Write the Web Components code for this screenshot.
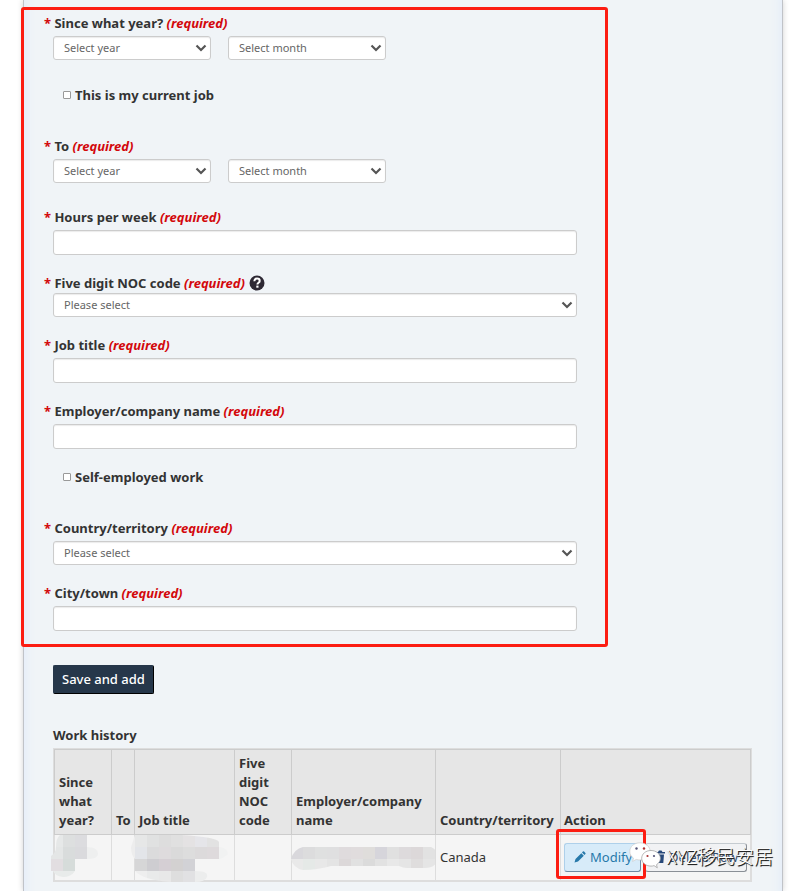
<!DOCTYPE html>
<html lang="en">
<head>
<meta charset="utf-8">
<meta name="viewport" content="width=device-width, initial-scale=1">
<title>Work history</title>
<style>
  body {
    margin: 0;
    background: #fff;
    color: #333;
    font: 13px/20px "Noto Sans", "Noto Sans CJK SC", sans-serif;
  }
</style>
</head>
<body>
<page-panel>
  <marked-area>
    <date-field label="Since what year?"></date-field>
    <check-field class="mid">This is my current job</check-field>
    <date-field class="far" label="To"></date-field>
    <text-field class="near" label="Hours per week"></text-field>
    <select-field label="Five digit NOC code" help></select-field>
    <text-field label="Job title"></text-field>
    <text-field label="Employer/company name"></text-field>
    <check-field>Self-employed work</check-field>
    <select-field class="far" label="Country/territory"></select-field>
    <text-field label="City/town"></text-field>
  </marked-area>
  <save-button>Save and add</save-button>
  <work-history></work-history>
</page-panel>

<script>
  // Styles shared by all the labelled fields
  const fieldStyle = `
    :host {
      display: block;
    }
    .row {
      display: flex;
      align-items: center;
      gap: 4px;
      height: 20px;
      margin-bottom: 3px;
    }
    .row.help {
      margin-bottom: 0;
    }
    label {
      font-weight: 700;
    }
    .star, em {
      color: #d3080c;
    }
    .controls {
      display: flex;
      gap: 17px;
      margin: 0 28px 0 9px;
    }
    input, select {
      box-sizing: border-box;
      width: 100%;
      height: 25px;
      margin: 0;
      padding: 0 10px;
      border: 1px solid #ccc;
      border-radius: 3px;
      background: #fff;
      box-shadow: inset 0 1px 1px rgba(0, 0, 0, 0.08);
      color: #666;
      font: 11px/16px "Noto Sans", sans-serif;
    }
    .select {
      display: grid;
      flex: 1;
      align-items: center;
    }
    .select > * {
      grid-area: 1 / 1;
    }
    .select svg {
      justify-self: end;
      margin-right: 4px;
      pointer-events: none;
    }
    select {
      height: 24px;
      appearance: none;
    }
  `;

  const helpIcon = `
    <svg width="16" height="16" viewBox="0 0 16 16" role="img" aria-label="Help">
      <circle cx="8" cy="8" r="7.5" fill="#2d2833"/>
      <path d="M5.3 6.2C5.4 4.4 6.5 3.6 8 3.6c1.600 0 2.700.9 2.700 2.300 0 1.900-2.300 1.900-2.300 3.500" fill="none" stroke="#fff" stroke-width="2"/>
      <path d="M7.300 10.600h2.200v2.100H7.300z" fill="#fff"/>
    </svg>
  `;

  function labelRow(text, id, help) {
    return `
      <div class="row ${help ? 'help' : ''}">
        <label for="${id}"><span class="star">*</span> ${text} <em>(required)</em></label>
        ${help ? helpIcon : ''}
      </div>
    `;
  }

  function selectBox(id, placeholder) {
    return `
      <div class="select">
        <select id="${id}" aria-label="${placeholder}"><option>${placeholder}</option></select>
        <svg width="12" height="8" viewBox="0 0 12 8">
          <path d="M1.500 1.500 6 6l4.500-4.500" fill="none" stroke="#555" stroke-width="2.200"/>
        </svg>
      </div>
    `;
  }

  class PagePanel extends HTMLElement {
    constructor() {
      super();
      this.attachShadow({ mode: 'open' }).innerHTML = `
        <style>
          :host {
            display: block;
            box-sizing: border-box;
            min-height: 100vh;
            margin: 0 16px 0 23px;
            padding: 7px 30px 9px 29px;
            border: solid #c0c3c8;
            border-width: 0 1px;
            background: #f0f4f7;
            box-shadow: 0 0 6px rgba(0, 0, 0, 0.18), inset 12px 0 12px -12px #dfeafa, inset -12px 0 12px -12px #dfeafa;
            clip-path: inset(0 -12px);
          }
        </style>
        <slot></slot>
      `;
    }
  }

  class MarkedArea extends HTMLElement {
    constructor() {
      super();
      this.attachShadow({ mode: 'open' }).innerHTML = `
        <style>
          :host {
            display: block;
            box-sizing: border-box;
            max-width: 587px;
            margin-left: -32px;
            padding: 3px 0 13px 20px;
            border: 3px solid #fc1d12;
            border-radius: 3px;
          }
          ::slotted(*) {
            margin-top: 18px;
          }
          ::slotted(:first-child) {
            margin-top: 0;
          }
          ::slotted(.near) {
            margin-top: 24px;
          }
          ::slotted(.mid) {
            margin-top: 25px;
          }
          ::slotted(.far) {
            margin-top: 31px;
          }
        </style>
        <slot></slot>
      `;
    }
  }

  class DateField extends HTMLElement {
    constructor() {
      super();
      this.attachShadow({ mode: 'open' }).innerHTML = `
        <style>
          ${fieldStyle}
          .controls {
            max-width: 333px;
          }
        </style>
        ${labelRow(this.getAttribute('label'), 'year')}
        <div class="controls">
          ${selectBox('year', 'Select year')}
          ${selectBox('month', 'Select month')}
        </div>
      `;
    }
  }

  class SelectField extends HTMLElement {
    constructor() {
      super();
      this.attachShadow({ mode: 'open' }).innerHTML = `
        <style>${fieldStyle}</style>
        ${labelRow(this.getAttribute('label'), 'choice', this.hasAttribute('help'))}
        <div class="controls">${selectBox('choice', 'Please select')}</div>
      `;
    }
  }

  class TextField extends HTMLElement {
    constructor() {
      super();
      this.attachShadow({ mode: 'open' }).innerHTML = `
        <style>${fieldStyle}</style>
        ${labelRow(this.getAttribute('label'), 'text')}
        <div class="controls"><input id="text" type="text"></div>
      `;
    }
  }

  class CheckField extends HTMLElement {
    constructor() {
      super();
      this.attachShadow({ mode: 'open' }).innerHTML = `
        <style>
          :host {
            display: block;
            padding-left: 19px;
          }
          label {
            display: flex;
            align-items: center;
            gap: 4px;
            font-weight: 700;
          }
          input {
            box-sizing: border-box;
            width: 8px;
            height: 8px;
            margin: 0;
            border: 1px solid #999;
            border-radius: 1px;
            background: #fff;
            appearance: none;
          }
          input:checked {
            background: #26374a;
          }
        </style>
        <label><input type="checkbox"><slot></slot></label>
      `;
    }
  }

  class SaveButton extends HTMLElement {
    constructor() {
      super();
      this.attachShadow({ mode: 'open' }).innerHTML = `
        <style>
          :host {
            display: flex;
            margin-top: 18px;
          }
          button {
            height: 29px;
            padding: 0 8px 2px;
            border: 1px solid #26374a;
            border-color: #26374a #000 #000 #26374a;
            border-radius: 2px;
            background: #26374a;
            color: #fff;
            font: 500 13px/20px "Noto Sans", sans-serif;
          }
        </style>
        <button type="button"><slot></slot></button>
      `;
    }
  }

  // Blocked-out cell values: rows of 12px tiles cut to an outline
  const patches = {
    since: {
      width: 48,
      height: 43,
      outline: 'M9 0H36V12Q47 12 47 19 47 24 36 24H24V36Q20 42 12 42 4 41 2 36H0V21Q5 18 5 12 5 3 9 0Z',
      rows: [
        ['e6e8e8', 'dddfdf', 'dcdcdf', 'eeeeee'],
        ['e4e6e6', 'd9dcdc', 'dadadd', 'eeefef'],
        ['e2dee1', 'd6dcda', 'efefef', 'efefef'],
        ['e8ebea', 'e8ebea', 'efefef', 'efefef'],
      ],
    },
    title: {
      width: 97,
      height: 48,
      outline: 'M4 0H50Q86 2 88 7V12Q97 13 97 19 92 24 88 24H64V36Q78 36 76 42 74 47 64 47H40Q12 45 4 36V24Q0 20 0 12Z',
      offset: 4,
      rows: [
        ['e6e7e7', 'e0e1e1', 'dddddd', 'e0e0e0', 'e4e2e3', 'e5e5e9', 'e2e2e2', 'f0f0f0'],
        ['e3e5e9', 'dbdbdc', 'dedbdd', 'dadada', 'dddddd', 'dcdadb', 'dedadc', 'f1f2f2'],
        ['d6d6d7', 'cecdd1', 'd5cfd4', 'd3d1d1', 'd2d2d6', 'eeeeee', 'efefef', 'efefef'],
        ['eeeeee', 'e9eaea', 'e8e8e8', 'dedede', 'e1e1e3', 'eceded', 'efefef', 'efefef'],
      ],
    },
    employer: {
      width: 147,
      height: 24,
      outline: 'M12 0H140Q147 3 147 10 146 21 134 21H116Q112 21 108 19H40Q26 23 12 23 2 21 0 12 3 2 12 0Z',
      rows: [
        ['d9d8dc', 'dcdcdd', 'dfe0e0', 'dfdfe0', 'dfdbdd', 'e0dcdd', 'dfdddb', 'd6d5db', 'e0e0e0', 'dddadc', 'dcd8d9', 'e2e2e2', 'e6e6e6'],
        ['e9e9e9', 'e5e9e7', 'e8e8e8', 'e4e4e4', 'dcd8d9', 'e1e1e1', 'dbdbdb', 'e2e2e2', 'e8e8e8', 'e5e5e5', 'dfdddd', 'e5e5e5', 'e6e6e6'],
      ],
    },
  };

  class TilePatch extends HTMLElement {
    constructor() {
      super();
      const patch = patches[this.getAttribute('name')];
      const offset = patch.offset || 0;
      const tiles = patch.rows.map((row, y) => row.map((color, x) => `
        <rect x="${x * 12 + offset}" y="${y * 12}" width="12" height="12" fill="#${color}"/>
      `).join('')).join('');
      this.attachShadow({ mode: 'open' }).innerHTML = `
        <style>
          :host {
            display: block;
            position: absolute;
          }
          svg {
            display: block;
          }
        </style>
        <svg width="${patch.width}" height="${patch.height}" shape-rendering="crispEdges" aria-hidden="true">
          <clipPath id="outline"><path d="${patch.outline}"/></clipPath>
          <g clip-path="url(#outline)">
            <rect width="${offset}" height="48" fill="#ededed"/>
            ${tiles}
          </g>
        </svg>
      `;
    }
  }

  class RowActions extends HTMLElement {
    constructor() {
      super();
      this.attachShadow({ mode: 'open' }).innerHTML = `
        <style>
          :host {
            display: flex;
            position: relative;
            gap: 4px;
          }
          button {
            display: flex;
            align-items: center;
            gap: 4px;
            height: 29px;
            padding: 0 8px 2px 9px;
            border: 1px solid #aed0ea;
            border-right-color: #6f8ba3;
            border-bottom-color: #6f8ba3;
            border-radius: 3px;
            background: #d7ebf9;
            color: #2779aa;
            font: 13px/20px "Noto Sans", sans-serif;
            white-space: nowrap;
          }
          .delete {
            flex: 1;
            border-color: #c5cbd0 #8a8f96 #8a8f96 #c5cbd0;
            background: #f1f2f4;
            color: #335075;
          }
          .mark {
            position: absolute;
            inset: -14px auto -7px -8px;
            width: 84px;
            border: 3px solid #fc1d12;
            border-radius: 3px;
          }
          .stamp {
            display: flex;
            position: absolute;
            top: -2px;
            right: -26px;
            align-items: center;
            gap: 5px;
            color: #fff;
            font: 300 19px/30px "Noto Sans CJK SC", sans-serif;
            text-shadow: 1px 1px 1px #222, 1px 1px 0 #333;
            white-space: nowrap;
          }
        </style>
        <button type="button">
          <svg width="12" height="12" viewBox="0 0 12 12">
            <path d="M.5 11.500l1-3.500L7.300 2.200l2.500 2.500-5.800 5.800zM8 1.500l.9-.9q.6-.5 1.200 0l1.300 1.300q.5.600 0 1.200l-.9.900z" fill="#2779aa"/>
          </svg>
          Modify
        </button>
        <button type="button" class="delete">
          <svg width="10" height="13" viewBox="0 0 10 13">
            <path d="M0 2h3l1-1.500h2.500l1 1.500H10v1.500H0zM1 4.500h8L8.300 13H1.700z" fill="#26487a"/>
          </svg>
          Delete Row
        </button>
        <span class="mark"></span>
        <span class="stamp">
          <svg width="32" height="28" viewBox="0 0 32 28">
            <path d="M11 .8C5 .8.800 4.600.800 9.500c0 2.800 1.400 5.100 3.700 6.600l-.9 3.300 3.700-2c1.200.4 2.400.6 3.700.6 5.800 0 10.200-3.800 10.200-8.500S16.800.8 11 .8z" fill="#fff" stroke="#ccc" stroke-width=".7"/>
            <circle cx="7.500" cy="6.500" r="1.200" fill="#557"/>
            <circle cx="15" cy="6.500" r="1.200" fill="#a33"/>
            <path d="M22 8.500c-5.300 0-9.300 3.400-9.300 7.800s4 7.800 9.300 7.800c1.100 0 2.100-.1 3-.5l3.300 2.200-.8-3.100c2.300-1.400 3.900-3.600 3.900-6.400 0-4.400-4.200-7.800-9.400-7.800z" fill="#fff" stroke="#999" stroke-width=".7"/>
            <circle cx="18.500" cy="14" r="1.100" fill="#a33"/>
            <circle cx="25" cy="14" r="1.100" fill="#557"/>
          </svg>
          <span>XYZ移民安居</span>
        </span>
      `;
    }
  }

  class WorkHistory extends HTMLElement {
    constructor() {
      super();
      this.attachShadow({ mode: 'open' }).innerHTML = `
        <style>
          :host {
            display: block;
            margin-top: 31px;
          }
          table {
            width: 100%;
            border: 1px solid #ddd;
            border-spacing: 0;
            table-layout: fixed;
            line-height: 19px;
          }
          caption {
            padding-bottom: 3px;
            font-weight: 700;
            line-height: 20px;
            text-align: left;
          }
          th, td {
            box-sizing: border-box;
            padding: 4px 2px 4px 4px;
            border: 0 solid #ccc;
            border-left-width: 1px;
            text-align: left;
          }
          th:last-child, td:last-child {
            padding: 4px 3px;
            border-right-width: 1px;
          }
          th {
            height: 85px;
            border-top-width: 1px;
            border-bottom-width: 1px;
            background: #e6e6e6;
            font-weight: 700;
            vertical-align: bottom;
          }
          td {
            position: relative;
            height: 46px;
            border-color: #ddd;
            border-bottom-width: 1px;
            background: #f5f5f5;
          }
          .since {
            top: 0;
            left: -4px;
          }
          .title {
            top: 0;
            left: -4px;
          }
          .employer {
            top: 12px;
            left: -1px;
          }
        </style>
        <table>
          <caption>Work history</caption>
          <colgroup>
            <col style="width: 57px">
            <col style="width: 23px">
            <col style="width: 100px">
            <col style="width: 57px">
            <col style="width: 144px">
            <col style="width: 125px">
            <col>
          </colgroup>
          <thead>
            <tr>
              <th>Since what year?</th>
              <th>To</th>
              <th>Job title</th>
              <th>Five digit NOC code</th>
              <th>Employer/company name</th>
              <th>Country/territory</th>
              <th>Action</th>
            </tr>
          </thead>
          <tbody>
            <tr>
              <td><tile-patch class="since" name="since"></tile-patch></td>
              <td></td>
              <td><tile-patch class="title" name="title"></tile-patch></td>
              <td></td>
              <td><tile-patch class="employer" name="employer"></tile-patch></td>
              <td>Canada</td>
              <td><row-actions></row-actions></td>
            </tr>
          </tbody>
        </table>
      `;
    }
  }

  customElements.define('page-panel', PagePanel);
  customElements.define('marked-area', MarkedArea);
  customElements.define('date-field', DateField);
  customElements.define('select-field', SelectField);
  customElements.define('text-field', TextField);
  customElements.define('check-field', CheckField);
  customElements.define('save-button', SaveButton);
  customElements.define('tile-patch', TilePatch);
  customElements.define('row-actions', RowActions);
  customElements.define('work-history', WorkHistory);
</script>
</body>
</html>
